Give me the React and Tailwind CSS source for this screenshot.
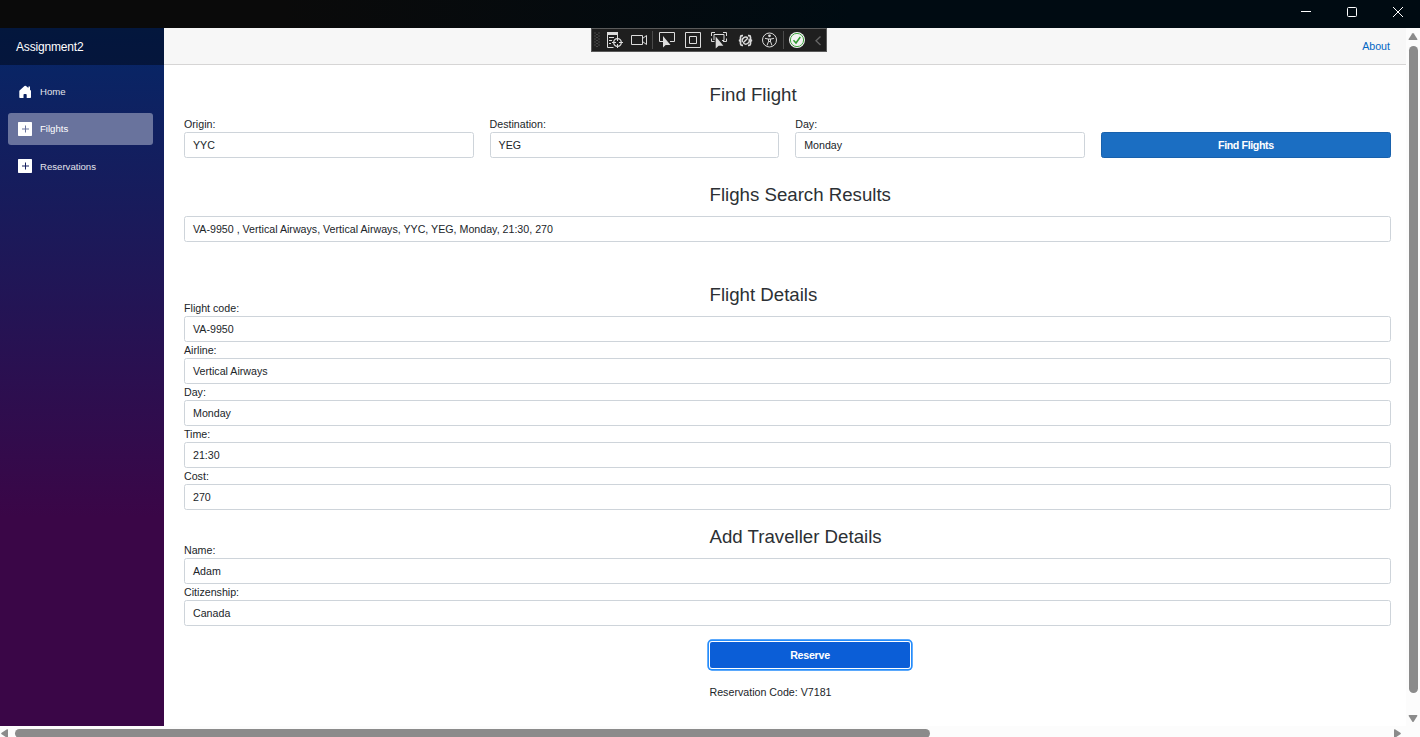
const flightDetails = [
  ['Flight code:', 'VA-9950'],
  ['Airline:', 'Vertical Airways'],
  ['Day:', 'Monday'],
  ['Time:', '21:30'],
  ['Cost:', '270'],
];

const travellerDetails = [
  ['Name:', 'Adam'],
  ['Citizenship:', 'Canada'],
];

const searchFields = [
  ['Origin:', 'YYC'],
  ['Destination:', 'YEG'],
  ['Day:', 'Monday'],
];

function Box({ children }) {
  return (
    <div className="flex h-[26px] items-center rounded-[2.5px] border border-[#ced4da] bg-white px-2 text-[#212529]">
      {children}
    </div>
  );
}

function Field({ label, value }) {
  return (
    <div>
      <div className="h-4 leading-4">{label}</div>
      <Box>{value}</Box>
    </div>
  );
}

function Heading({ children }) {
  return (
    <h3 className="ml-[525.5px] h-[22px] pt-px text-[18.67px] leading-[22px] text-[#2c3034]">{children}</h3>
  );
}

function HomeIcon() {
  return (
    <svg width="14" height="14" viewBox="0 0 14 14" fill="#fff">
      <path d="M7.300.800 6.500.900 1.300 5.800V12.300q0 .7.7.7h3.500V9.800q0-.9.9-.9h1.400q.9 0 .9.9V13h3.600q.7 0 .7-.7V5.800L12 4.700V1.500h-1.600v1.600L8 .9Z" />
    </svg>
  );
}

function PlusIcon({ className }) {
  return (
    <svg className={className} width="14" height="14" viewBox="0 0 14 14" fill="#fff">
      <path
        fillRule="evenodd"
        d="M.7 0h12.600q.7 0 .7.7v12.600q0 .7-.7.7H.7q-.7 0-.7-.7V.7Q0 0 .7 0ZM7 3.500v3H4v1h3v3h1v-3h3v-1h-3v-3Z"
      />
    </svg>
  );
}

function NavItem({ icon, label, active }) {
  return (
    <div
      className={
        'flex h-8 items-center gap-2 rounded-[3px] pl-[10px] text-[9.6px] ' +
        (active ? 'bg-[#69739d] text-white' : 'text-[#e3e4ea]')
      }
    >
      {icon}
      <span>{label}</span>
    </div>
  );
}

function DebugIcons() {
  return (
    <svg width="236" height="24" viewBox="0 0 236 24" fill="none" stroke="#dcdcdc">
      <rect x=".5" y=".5" width="235" height="23" fill="#1f1f1f" stroke="#5a5a5a" />
      <path d="M4 4.500v15M8 4.500v15" stroke="#484848" strokeDasharray="1 2" strokeWidth="2" />
      <path d="M6 6v14" stroke="#484848" strokeDasharray="1 2" strokeWidth="2" />
      <path d="M16.500 5v14.500h6M26.500 5v4" />
      <path d="M16 4h11v3H16z" fill="#dcdcdc" stroke="none" />
      <path d="M18 9.500h5M18 12.500h3M18 15.500h2" />
      <circle cx="26.500" cy="14.500" r="3.800" strokeWidth="1.300" />
      <path d="M26.500 9v4M26.500 16v4M21 14.500h4M28 14.500h4" />
      <path d="M40.500 7.500h11v9h-11zM51.500 10.500l4-3v9l-4-3" />
      <path d="M61.500 3v18M192.500 3v18" stroke="#4a4a4a" />
      <path d="M72 13.500h-3.500v-9h15v9H79" />
      <path d="M72 8v11.500l2.700-2.500h4.800z" fill="#dcdcdc" stroke="none" />
      <path d="M94.500 4.500h15v15h-15zM98.500 8.500h7v7h-7z" />
      <path d="M120.500 8V4.500h3.500M132 4.500h3.500V8M120.500 10.500v3h3M132 13.500h3.500v-3" />
      <path d="M123 12V6.500h10v6h-2" />
      <path d="M124.700 8.500v12l3-2.800h4.700z" fill="#dcdcdc" stroke="none" />
      <path
        d="M152 7.700h-1q-1.500 0-1.500 1.500v1.600q0 1.700-1.700 1.700 1.700 0 1.700 1.700v1.600q0 1.500 1.500 1.500h1M157 7.700h1q1.500 0 1.500 1.500v1.600q0 1.700 1.700 1.700-1.700 0-1.700 1.700v1.600q0 1.500-1.500 1.500h-1"
        strokeWidth="1.700"
      />
      <path d="M156.900 9.800A3.600 3.600 0 0 0 151.400 14M158 11a3.600 3.600 0 0 1-5.500 4.300M152 15l5-5" strokeWidth="1.400" />
      <circle cx="178.500" cy="12" r="7" />
      <circle cx="178.500" cy="7.800" r="1.400" fill="#dcdcdc" stroke="none" />
      <path d="M174 10.300l3 .7h3l3-.7M177.500 11v2.500l-1.500 4M179.500 11v2.500l1.500 4M177.500 13.500h2" />
      <circle cx="206" cy="12" r="8" fill="#f2f2f2" stroke="none" />
      <circle cx="206" cy="12" r="6.600" stroke="#3fa33f" />
      <path d="M202.500 12.300l2.500 2.700 4.300-6" stroke="#2f9a2f" strokeWidth="1.500" />
      <path d="M229.500 8.500 225 12.700l4.500 4.300" stroke="#666" strokeWidth="1.300" />
    </svg>
  );
}

function TitleBar() {
  return (
    <div className="flex h-7 items-start justify-end bg-linear-to-r/srgb from-[#0a0a0a] from-20% to-[#000b12] to-60%">
      <svg width="120" height="24" viewBox="0 0 120 24" fill="none" stroke="#fff">
        <path d="M1 11.500h10" />
        <rect x="47.500" y="7.500" width="9" height="9" rx="1" />
        <path d="M93 7l10 10M103 7 93 17" />
      </svg>
    </div>
  );
}

export default function App() {
  return (
    <div className="flex h-[737px] w-[1420px] flex-col overflow-hidden bg-white font-['Liberation_Sans',Arial,sans-serif] text-[10.67px] text-[#212529]">
      <TitleBar />
      <div className="flex h-[698px]">
        <aside className="w-[164px] bg-linear-to-b/srgb from-[#052767] from-0% to-[#3a0647] to-70%">
          <div className="flex h-[37px] items-center bg-black/40 pl-4 text-[12px] tracking-[-0.17px] text-white">
            Assignment2
          </div>
          <nav className="flex flex-col gap-[5px] pt-[11px] pr-[11px] pl-2">
            <NavItem icon={<HomeIcon />} label="Home" />
            <NavItem icon={<PlusIcon />} label="Filghts" active />
            <div className="pt-px">
              <NavItem icon={<PlusIcon className="mb-[2px]" />} label="Reservations" />
            </div>
          </nav>
        </aside>
        <main className="w-[1242px]">
          <header className="relative flex h-[37px] items-center justify-end border-b border-[#d6d5d5] bg-[#f7f7f7] pr-4">
            <div className="absolute top-0 left-[427px]">
              <DebugIcons />
            </div>
            <span className="text-[#0366c3]">About</span>
          </header>
          <div className="pt-[18px] pr-[15px] pl-5">
            <Heading>Find Flight</Heading>
            <div className="mt-[11px] grid grid-cols-[289.6px_289.6px_289.6px_1fr] items-end gap-x-4">
              {searchFields.map(([label, value]) => (
                <Field key={label} label={label} value={value} />
              ))}
              <button className="h-[26px] rounded-[2.5px] border border-[#1861ac] bg-[#1b6ec2] font-bold tracking-[-0.4px] text-white">
                Find Flights
              </button>
            </div>
            <div className="mt-[25px]">
              <Heading>Flighs Search Results</Heading>
            </div>
            <div className="mt-[11px]">
              <Box>VA-9950 , Vertical Airways, Vertical Airways, YYC, YEG, Monday, 21:30, 270</Box>
            </div>
            <div className="mt-[41px]">
              <Heading>Flight Details</Heading>
            </div>
            <div className="-mt-[5px]">
              {flightDetails.map(([label, value]) => (
                <Field key={label} label={label} value={value} />
              ))}
            </div>
            <div className="mt-[15px]">
              <Heading>Add Traveller Details</Heading>
            </div>
            <div className="-mt-[5px]">
              {travellerDetails.map(([label, value]) => (
                <Field key={label} label={label} value={value} />
              ))}
            </div>
            <button className="mt-4 ml-[526px] block h-[26px] w-[200px] rounded-[2px] bg-[#0b5ed7] font-bold tracking-[-0.25px] text-white shadow-[0_0_0_1px_#fff,0_0_0_2.7px_#258cfb]">
              Reserve
            </button>
            <p className="mt-4 ml-[525.5px] leading-4">Reservation Code: V7181</p>
          </div>
        </main>
        <div className="flex w-[14px] flex-col items-center bg-[#fcfcfc]">
          <svg className="mt-[5px]" width="10" height="8" viewBox="0 0 10 8" fill="#8b8b8b">
            <path d="M4.200.600q.8-1 1.600 0L9.300 6q.4 1-.6 1H1.300Q.3 7 .7 6Z" />
          </svg>
          <div className="mt-[5px] h-[647px] w-[9px] rounded-full bg-[#8b8b8b]" />
          <svg className="mt-[22px]" width="10" height="8" viewBox="0 0 10 8" fill="#8b8b8b">
            <path d="M4.200 6.400q.8 1 1.600 0L9.300 1q.4-1-.6-1H1.300Q.3 0 .7 1Z" />
          </svg>
        </div>
      </div>
      <div className="flex h-[11px] items-start bg-[#fcfcfc] pt-[3px]">
        <svg className="mr-[6px] ml-[1px]" width="8" height="9" viewBox="0 0 8 9" fill="#8b8b8b">
          <path d="M.600 3.700q-1 .8 0 1.600L6 8.800q1 .4 1-.6V.9Q7-.1 6 .3Z" />
        </svg>
        <div className="h-[9px] w-[915px] rounded-full bg-[#8b8b8b]" />
        <svg className="ml-[464px]" width="8" height="9" viewBox="0 0 8 9" fill="#8b8b8b">
          <path d="M6.400 3.700q1 .8 0 1.600L1 8.800q-1 .4-1-.6V.9Q0-.1 1 .3Z" />
        </svg>
      </div>
    </div>
  );
}
